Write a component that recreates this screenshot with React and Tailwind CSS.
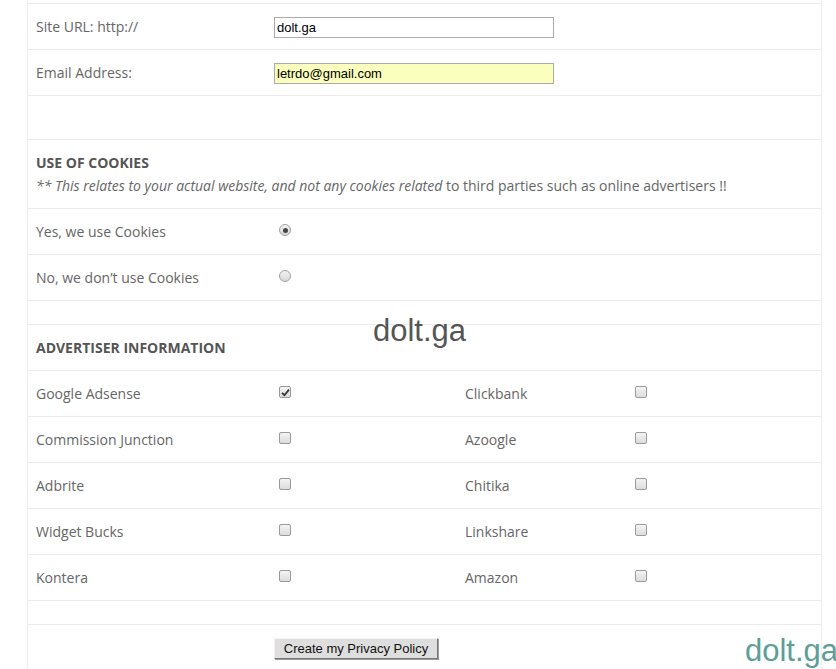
import React from 'react';

const ADVERTISERS = [
  ['Google Adsense', true, 'Clickbank', false],
  ['Commission Junction', false, 'Azoogle', false],
  ['Adbrite', false, 'Chitika', false],
  ['Widget Bucks', false, 'Linkshare', false],
  ['Kontera', false, 'Amazon', false],
];

function Checkbox({ checked }) {
  return (
    <span className="mb-[3px] ml-[5px] flex h-[12px] w-[12px] items-center justify-center rounded-[2px] border border-[#9a9a9a] bg-gradient-to-b from-[#f4f4f4] to-[#dcdcdc]">
      {checked && (
        <svg width="9" height="9" viewBox="0 0 9 9">
          <path d="M1 4.8 L3.4 7.2 L8 1.6" fill="none" stroke="#333" strokeWidth="1.8" />
        </svg>
      )}
    </span>
  );
}

function Radio({ checked }) {
  return (
    <span className="mb-[3px] ml-[5px] flex h-[12px] w-[12px] items-center justify-center rounded-full border border-[#a0a0a0] bg-gradient-to-b from-[#f2f2f2] to-[#d8d8d8]">
      {checked && <span className="h-[5px] w-[5px] rounded-full bg-[#444]" />}
    </span>
  );
}

function Row({ children, className = 'h-[46px]' }) {
  return <div className={`flex items-center border-b border-[#ececec] ${className}`}>{children}</div>;
}

export default function App() {
  const label = 'w-[246px] shrink-0 pl-2 text-[14px] text-[#666]';

  return (
    <div className="relative h-[669px] w-[836px] overflow-hidden bg-white font-['Open_Sans',sans-serif]">
      <div className="ml-[27px] h-full w-[795px] border-x border-[#ececec]">
        <div className="h-[4px] border-b border-[#ececec]" />

        <Row>
          <span className={label}>Site URL: http://</span>
          <input
            readOnly
            value="dolt.ga"
            className="mt-[2px] h-[21px] w-[280px] border border-[#ababab] bg-white px-[2px] font-['Liberation_Sans',Arial,sans-serif] text-[13px] text-black outline-none"
          />
        </Row>
        <Row>
          <span className={label}>Email Address:</span>
          <input
            readOnly
            value="letrdo@gmail.com"
            className="mt-[2px] h-[21px] w-[280px] border border-[#ababab] bg-[#faffbd] px-[2px] font-['Liberation_Sans',Arial,sans-serif] text-[13px] text-black outline-none"
          />
        </Row>
        <Row className="h-[44px]" />

        {/* cookies */}
        <div className="border-b border-[#ececec] px-2 py-[11px] text-[14px] leading-[23px] text-[#666]">
          <div className="font-bold text-[#555]">USE OF COOKIES</div>
          <div>
            <em>** This relates to your actual website, and not any cookies related</em> to third parties such as online advertisers !!
          </div>
        </div>
        <Row>
          <span className={label}>Yes, we use Cookies</span>
          <Radio checked />
        </Row>
        <Row>
          <span className={label}>No, we don’t use Cookies</span>
          <Radio />
        </Row>
        <Row className="h-[24px]" />

        {/* advertisers */}
        <Row>
          <span className="pl-2 text-[14px] font-bold text-[#555]">ADVERTISER INFORMATION</span>
        </Row>
        {ADVERTISERS.map(([a, ac, b, bc]) => (
          <Row key={a}>
            <span className={label}>{a}</span>
            <span className="flex w-[183px] shrink-0">
              <Checkbox checked={ac} />
            </span>
            <span className="w-[173px] shrink-0 pl-2 text-[14px] text-[#666]">{b}</span>
            <Checkbox checked={bc} />
          </Row>
        ))}
        <Row className="h-[24px]" />

        <div className="pl-[246px] pt-[10px]">
          <button className="h-[21px] w-[164px] border border-t-[#f4f4f4] border-l-[#f4f4f4] border-b-[#777] border-r-[#777] bg-[#dedede] font-['Liberation_Sans',Arial,sans-serif] text-[13px] leading-none text-[#111] shadow-[1px_1px_0_#9a9a9a]">
            Create my Privacy Policy
          </button>
        </div>
      </div>

      {/* watermarks */}
      <div className="pointer-events-none absolute left-[373px] top-[315px] font-['Liberation_Sans',Arial,sans-serif] text-[31px] leading-[31px] text-[#555]">
        dolt.ga
      </div>
      <div className="pointer-events-none absolute left-[745px] top-[635px] font-['Liberation_Sans',Arial,sans-serif] text-[31px] leading-[31px] text-[#5d9e97]">
        dolt.ga
      </div>
    </div>
  );
}
